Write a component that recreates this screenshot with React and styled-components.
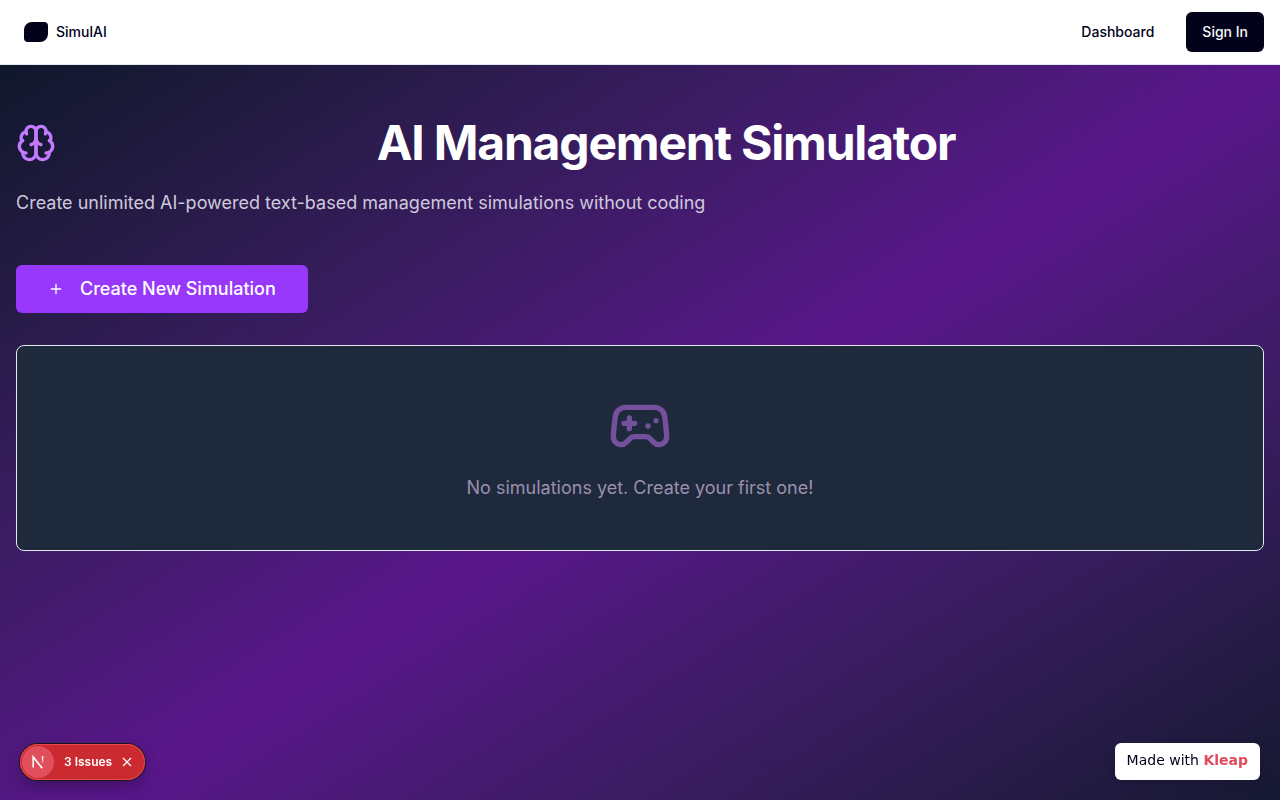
import React from 'react';
import styled, { createGlobalStyle } from 'styled-components';
import { Gamepad2, Plus } from 'lucide-react';

const GlobalStyle = createGlobalStyle`
  *, *::before, *::after { box-sizing: border-box; }
  body {
    margin: 0;
    font-family: Inter, "Liberation Sans", sans-serif;
    color: #02021a;
    background: #fff;
    -webkit-font-smoothing: antialiased;
  }
  h1, p { margin: 0; }
  button { font: inherit; border: 0; cursor: pointer; }
  a { color: inherit; text-decoration: none; }
`;

const Page = styled.div`
  min-height: 100vh;
  display: flex;
  flex-direction: column;
`;

const TopBar = styled.header`
  height: 65px;
  padding: 0 16px;
  display: flex;
  align-items: center;
  justify-content: space-between;
  background: #fff;
  border-bottom: 1px solid #e2e8f0;
`;

const Brand = styled.a`
  display: flex;
  align-items: center;
  gap: 8px;
  padding: 0 8px;
  font-size: 14px;
  line-height: 20px;
  font-weight: 500;
`;

const BrandMark = styled.span`
  width: 24px;
  height: 20px;
  background: #02021a;
  border-radius: 8px 4px 8px 4px;
`;

const Nav = styled.nav`
  display: flex;
  align-items: center;
  gap: 16px;
  font-size: 14px;
  line-height: 20px;
  font-weight: 500;
`;

const NavLink = styled.a`
  padding: 8px 16px;
`;

const SignIn = styled.button`
  height: 40px;
  padding: 0 16px;
  border-radius: 6px;
  background: #02021a;
  color: #f8fafc;
`;

const Main = styled.main`
  flex: 1;
  padding: 48px 16px;
  background: #0f172b linear-gradient(to bottom right in oklab, #0f172b, #59168b, #0f172b) no-repeat;
  background-size: 100% 100vh;
`;

const Heading = styled.div`
  display: flex;
  align-items: center;
  gap: 12px;
  margin-bottom: 16px;
  color: #c27aff;
`;

const Title = styled.h1`
  flex: 1;
  text-align: center;
  color: #fff;
  font-size: 48px;
  line-height: 60px;
  font-weight: 700;
  letter-spacing: -0.025em;
`;

const Intro = styled.p`
  margin-bottom: 48px;
  color: #cfc9dc;
  font-size: 18px;
  line-height: 28px;
`;

const CreateButton = styled.button`
  display: flex;
  align-items: center;
  gap: 16px;
  height: 48px;
  margin-bottom: 32px;
  padding: 0 32px;
  border-radius: 6px;
  background: #9838fb;
  color: #fff;
  font-size: 18px;
  line-height: 28px;
  font-weight: 500;
`;

const EmptyCard = styled.section`
  display: flex;
  flex-direction: column;
  align-items: center;
  gap: 16px;
  padding: 48px 24px;
  border: 1px solid #e2e8f0;
  border-radius: 8px;
  background: #1e293b;
  color: #9a90b0;
  font-size: 18px;
  line-height: 28px;

  svg { color: #74509d; }
`;

const IssuesPill = styled.div`
  position: fixed;
  left: 20px;
  bottom: 20px;
  display: flex;
  align-items: center;
  height: 36px;
  padding: 0 6px 0 2px;
  border-radius: 18px;
  background: #ca2a30;
  box-shadow: inset 0 0 0 1px #e5484d, 0 0 0 1px #171717, 0 8px 16px rgba(0, 0, 0, 0.24);
  color: #fff;
  font-size: 12px;
  line-height: 16px;
  font-weight: 600;
`;

const PillButton = styled.button`
  display: flex;
  align-items: center;
  justify-content: center;
  padding: 0;
  background: none;
  color: #fff;
`;

const LogoButton = styled(PillButton)`
  width: 32px;
  height: 32px;
  margin-right: 10px;
  border-radius: 50%;
  background: #e04f5b;
`;

const CloseButton = styled(PillButton)`
  width: 24px;
  height: 24px;
  margin-left: 3px;
`;

const MadeWith = styled.a`
  position: fixed;
  right: 20px;
  bottom: 20px;
  padding: 7px 12px 9px;
  border-radius: 6px;
  background: #fff;
  box-shadow: 0 2px 8px rgba(0, 0, 0, 0.15);
  font-family: "DejaVu Sans", sans-serif;
  font-size: 14px;
  line-height: 21px;

  strong { color: #e2495b; }
`;

function BrainIcon() {
  return (
    <svg
      width="40"
      height="40"
      viewBox="0 0 24 24"
      fill="none"
      stroke="currentColor"
      strokeWidth="2"
      strokeLinecap="round"
      strokeLinejoin="round"
      aria-hidden="true"
    >
      <path d="M12 5a3 3 0 1 0-5.997.125 4 4 0 0 0-2.526 5.77 4 4 0 0 0 .556 6.588A4 4 0 1 0 12 18Z" />
      <path d="M12 5a3 3 0 1 1 5.997.125 4 4 0 0 1 2.526 5.77 4 4 0 0 1-.556 6.588A4 4 0 1 1 12 18Z" />
      <path d="M15 13a4.5 4.5 0 0 1-3-4 4.5 4.5 0 0 1-3 4" />
      <path d="M17.599 6.5a3 3 0 0 0 .399-1.375" />
      <path d="M6.003 5.125A3 3 0 0 0 6.401 6.5" />
      <path d="M3.477 10.896a4 4 0 0 1 .585-.396" />
      <path d="M19.938 10.5a4 4 0 0 1 .585.396" />
      <path d="M6 18a4 4 0 0 1-1.967-.516" />
      <path d="M19.967 17.484A4 4 0 0 1 18 18" />
    </svg>
  );
}

function NextMark() {
  return (
    <svg width="14" height="14" viewBox="0 0 14 14" fill="none" aria-hidden="true">
      <defs>
        <linearGradient id="stem" x1="0" y1="1" x2="0" y2="11" gradientUnits="userSpaceOnUse">
          <stop stopColor="#fff" />
          <stop offset="0.4" stopColor="#fff" stopOpacity="0.7" />
          <stop offset="0.8" stopColor="#fff" stopOpacity="0" />
        </linearGradient>
      </defs>
      <path d="M2.2 12.5V1.9L11.2 13.2" stroke="#fff" strokeWidth="1.6" />
      <path d="M11.6 1v10" stroke="url(#stem)" strokeWidth="1.5" />
    </svg>
  );
}

function CloseMark() {
  return (
    <svg width="10" height="10" viewBox="0 0 10 10" aria-hidden="true">
      <path d="M1 1l8 8M9 1L1 9" stroke="currentColor" strokeWidth="1.2" />
    </svg>
  );
}

export default function App() {
  return (
    <Page>
      <GlobalStyle />
      <TopBar>
        <Brand href="#">
          <BrandMark />
          SimulAI
        </Brand>
        <Nav>
          <NavLink href="#">Dashboard</NavLink>
          <SignIn type="button">Sign In</SignIn>
        </Nav>
      </TopBar>
      <Main>
        <Heading>
          <BrainIcon />
          <Title>AI Management Simulator</Title>
        </Heading>
        <Intro>Create unlimited AI-powered text-based management simulations without coding</Intro>
        <CreateButton type="button">
          <Plus size={16} />
          Create New Simulation
        </CreateButton>
        <EmptyCard>
          <Gamepad2 size={64} />
          <p>No simulations yet. Create your first one!</p>
        </EmptyCard>
      </Main>
      <IssuesPill>
        <LogoButton type="button" aria-label="Open developer tools"><NextMark /></LogoButton>
        <PillButton type="button">3 Issues</PillButton>
        <CloseButton type="button" aria-label="Hide issues"><CloseMark /></CloseButton>
      </IssuesPill>
      <MadeWith href="#">Made with <strong>Kleap</strong></MadeWith>
    </Page>
  );
}
